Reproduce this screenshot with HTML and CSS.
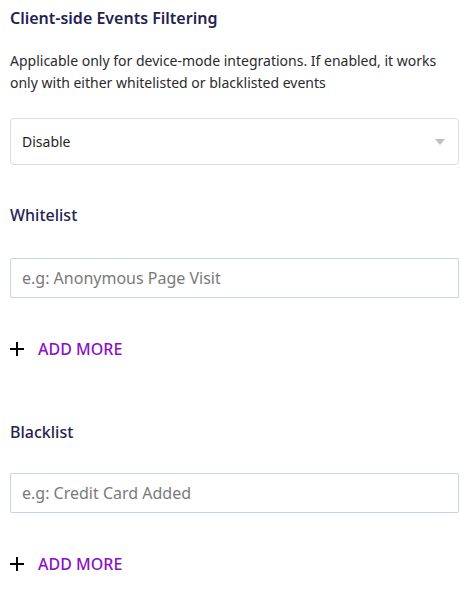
FILE: index.html
```html
<!DOCTYPE html>
<html>
<head>
<meta charset="utf-8">
<link rel="stylesheet" href="styles.css">
</head>
<body>
<div class="panel">
  <h2 class="title">Client-side Events Filtering</h2>
  <p class="desc">Applicable only for device-mode integrations. If enabled, it works only with either whitelisted or blacklisted events</p>
  <div class="select">
    <span>Disable</span>
    <svg class="caret" width="10" height="6" viewBox="0 0 10 6"><path d="M0 0h10L5 6z" fill="#bfbfbf"/></svg>
  </div>

  <h3 class="label label-white">Whitelist</h3>
  <div class="input"><span class="ph">e.g: Anonymous Page Visit</span></div>
  <div class="add">
    <svg width="14" height="14" viewBox="0 0 14 14"><path d="M7 0v14M0 7h14" stroke="#000" stroke-width="2"/></svg>
    <span>ADD MORE</span>
  </div>

  <h3 class="label label-black">Blacklist</h3>
  <div class="input input-black"><span class="ph">e.g: Credit Card Added</span></div>
  <div class="add">
    <svg width="14" height="14" viewBox="0 0 14 14"><path d="M7 0v14M0 7h14" stroke="#000" stroke-width="2"/></svg>
    <span>ADD MORE</span>
  </div>
</div>
</body>
</html>
```
FILE: styles.css
```css
html, body {
  margin: 0;
  padding: 0;
  background: #fff;
}
body {
  font-family: "Noto Sans", "Open Sans", sans-serif;
}
.panel {
  padding: 6px 10px 0 10px;
  display: flex;
  flex-direction: column;
}
.title {
  margin: 0;
  font-size: 16px;
  line-height: 24px;
  font-weight: 600;
  color: #1f2352;
}
.desc {
  margin: 20px 0 0 0;
  font-size: 14px;
  line-height: 22px;
  color: #2b2b2b;
}
.select {
  margin-top: 24px;
  height: 47px;
  box-sizing: border-box;
  border: 1px solid #dcdcdc;
  border-radius: 4px;
  display: flex;
  align-items: center;
  justify-content: space-between;
  padding: 0 13px 0 11px;
  font-size: 14px;
  color: #1f1f1f;
}
.caret {
  display: block;
}
.label {
  margin: 0;
  font-size: 16px;
  line-height: 24px;
  font-weight: 500;
  color: #1f2352;
}
.label-white {
  margin-top: 38px;
}
.label-black {
  margin-top: 59px;
}
.input {
  margin-top: 31px;
  height: 40px;
  box-sizing: border-box;
  border: 1px solid #c8d3df;
  border-radius: 2px;
  display: flex;
  align-items: center;
  padding: 0 11px;
  font-size: 16px;
}
.input-black {
  margin-top: 29px;
}
.ph {
  color: #7a7a7a;
}
.add {
  margin-top: 39px;
  display: flex;
  align-items: center;
  gap: 14px;
  height: 24px;
}
.add svg {
  display: block;
}
.add span {
  font-size: 16px;
  font-weight: 500;
  color: #8c0fc4;
  line-height: 24px;
}
```
